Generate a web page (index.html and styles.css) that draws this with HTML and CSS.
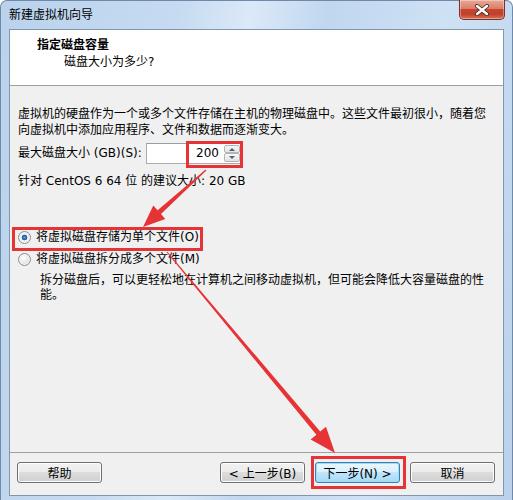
FILE: index.html
```html
<!DOCTYPE html>
<html lang="zh-CN">
<head>
  <meta charset="UTF-8">
  <title>新建虚拟机向导</title>
  <link rel="stylesheet" href="styles.css">
</head>
<body>

  <div class="window">
    <div class="titlebar">
      <span class="title">新建虚拟机向导</span>
      <button class="close" type="button" aria-label="关闭">
        <svg width="16" height="12" viewBox="0 0 16 12">
          <path d="M3 2 L13 10 M13 2 L3 10" stroke="#3b2a26" stroke-width="4" stroke-linecap="round"/>
          <path d="M3 2 L13 10 M13 2 L3 10" stroke="#fff" stroke-width="2.4" stroke-linecap="round"/>
        </svg>
      </button>
    </div>

    <div class="client">
      <div class="header">
        <div class="header-title">指定磁盘容量</div>
        <div class="header-sub">磁盘大小为多少?</div>
      </div>

      <div class="content">
        <p class="intro">虚拟机的硬盘作为一个或多个文件存储在主机的物理磁盘中。这些文件最初很小，随着您向虚拟机中添加应用程序、文件和数据而逐渐变大。</p>

        <div class="size-row">
          <label for="size">最大磁盘大小 (GB)(S):</label>
          <div class="spin">
            <input id="size" type="text" value="200">
            <div class="spin-btns">
              <span class="spin-up"></span>
              <span class="spin-down"></span>
            </div>
          </div>
        </div>

        <p class="hint">针对 CentOS 6 64 位 的建议大小: 20 GB</p>

        <div class="options">
          <label class="radio"><span class="dot checked"></span>将虚拟磁盘存储为单个文件(O)</label>
          <label class="radio"><span class="dot"></span>将虚拟磁盘拆分成多个文件(M)</label>
          <p class="desc">拆分磁盘后，可以更轻松地在计算机之间移动虚拟机，但可能会降低大容量磁盘的性能。</p>
        </div>
      </div>

      <div class="footer">
        <button type="button" class="btn">帮助</button>
        <button type="button" class="btn btn-back">&lt; 上一步(B)</button>
        <button type="button" class="btn btn-next">下一步(N) &gt;</button>
        <button type="button" class="btn">取消</button>
      </div>
    </div>

    <!-- red annotations drawn over the dialog -->
    <svg class="marks" width="513" height="500" viewBox="0 0 513 500">
      <g fill="none" stroke="#e63436" stroke-width="3">
        <rect x="187.5" y="142.5" width="54" height="24"/>
        <rect x="13.5" y="228.5" width="188" height="21"/>
        <rect x="312.5" y="457.5" width="92" height="30"/>
      </g>
      <g fill="#e63436">
        <polygon points="206.4,170.4 161,214.1 165.3,218.9 143,227 153.3,205.5 157.6,210.3 205.6,169.6"/>
        <polygon points="167.4,251.7 320.2,431.5 326,426.7 335,453 310.6,439.5 316.4,434.7 166.6,252.3"/>
      </g>
    </svg>
  </div>

</body>
</html>
```

FILE: styles.css
```css
body {
  margin: 0;
  font-family: "DejaVu Sans", "Noto Sans CJK SC", sans-serif;
  font-size: 12px;
  color: #000;
  background: #fff;
}

.window {
  position: relative;
  box-sizing: border-box;
  width: 513px;
  height: 500px;
  padding: 0 8px 4px 8px;
  display: flex;
  flex-direction: column;
  border: 1px solid #6f8aa8;
  border-bottom: none;
  border-radius: 7px 7px 0 0;
  background: linear-gradient(100deg, #bad2ec 0%, #c6dbf1 30%, #dbe9f8 42%, #c0d7ef 55%, #cfe1f4 75%, #b9d1eb 100%);
}

.titlebar {
  height: 28px;
  display: flex;
  align-items: center;
  position: relative;
}

.title {
  line-height: 16px;
  margin-top: -1px;
}

.close {
  position: absolute;
  top: -1px;
  right: -1px;
  width: 46px;
  height: 20px;
  padding: 0;
  display: flex;
  align-items: center;
  justify-content: center;
  border: 1px solid #7b3226;
  border-top: none;
  border-radius: 0 0 5px 5px;
  background: linear-gradient(#e9a897 0%, #dc7f68 45%, #c7432c 50%, #c2402a 75%, #d9735a 100%);
  box-shadow: inset 0 0 0 1px rgba(255,255,255,0.35);
}

.client {
  flex: 1;
  display: flex;
  flex-direction: column;
  border: 1px solid #8296ae;
  background: #f0f0f0;
}

.header {
  height: 56px;
  box-sizing: border-box;
  padding: 7px 0 0 27px;
  background: #fff;
  border-bottom: 1px solid #a0a0a0;
  line-height: 16px;
}

.header-title {
  font-weight: bold;
}

.header-sub {
  padding-left: 27px;
  margin-top: 1px;
}

.content {
  flex: 1;
  padding: 20px 0 0 8px;
}

.intro {
  margin: 0;
  width: 474px;
  line-height: 16px;
}

.size-row {
  display: flex;
  align-items: center;
  height: 22px;
  margin-top: 4px;
}

.size-row label {
  width: 128px;
  line-height: 16px;
}

.spin {
  display: flex;
  height: 21px;
  box-sizing: border-box;
  border: 1px solid #abadb3;
  border-top-color: #9a9ca3;
  background: #fff;
}

.spin input {
  width: 72px;
  border: none;
  padding: 0 5px 0 0;
  margin: 0;
  font: inherit;
  text-align: right;
  background: transparent;
  outline: none;
}

.spin-btns {
  width: 16px;
  display: flex;
  flex-direction: column;
  padding: 1px 1px 1px 0;
}

.spin-up,
.spin-down {
  flex: 1;
  position: relative;
  border: 1px solid #b5b5b5;
  border-radius: 2px;
  background: linear-gradient(#f7f7f7, #e3e3e3);
}

.spin-up::after,
.spin-down::after {
  content: "";
  position: absolute;
  left: 4px;
  top: 2px;
  border-left: 3px solid transparent;
  border-right: 3px solid transparent;
}

.spin-up::after {
  border-bottom: 3px solid #4d6185;
}

.spin-down::after {
  border-top: 3px solid #4d6185;
}

.hint {
  margin: 9px 0 0;
  line-height: 16px;
}

.options {
  margin-top: 37px;
}

.radio {
  display: flex;
  align-items: center;
  height: 22px;
  line-height: 16px;
}

.dot {
  width: 11px;
  height: 11px;
  margin-right: 5px;
  border: 1px solid #8b8d90;
  border-radius: 50%;
  background: radial-gradient(circle at 40% 35%, #ffffff 0%, #e6e6e6 55%, #cfcfcf 100%);
  box-shadow: inset 0 0 0 1px #f4f4f4;
}

.dot.checked {
  background: radial-gradient(circle at 50% 50%, #5fa2d8 0%, #1f5fa8 28%, #2d6bb0 34%, #f2f2f2 40%, #dcdcdc 100%);
}

.desc {
  margin: 3px 0 0 22px;
  width: 450px;
  line-height: 15px;
}

.footer {
  display: flex;
  padding: 9px 8px 12px 7px;
  border-top: 1px solid #a0a0a0;
}

.btn {
  width: 85px;
  height: 21px;
  padding: 0;
  font: inherit;
  color: #000;
  border: 1px solid #707070;
  border-radius: 3px;
  background: linear-gradient(#f2f2f2 0%, #ebebeb 50%, #dddddd 50%, #cfcfcf 100%);
  box-shadow: inset 0 0 0 1px #fcfcfc;
}

.btn-back {
  margin-left: auto;
}

.btn + .btn-next,
.btn-next + .btn {
  margin-left: 10px;
}

.btn-next {
  border-color: #3c7fb1;
  background: linear-gradient(#eaf6fd 0%, #d9f0fc 50%, #bee6fd 50%, #a7d9f5 100%);
  box-shadow: inset 0 0 0 1px #9edcfa;
}

.marks {
  position: absolute;
  left: -1px;
  top: -1px;
  pointer-events: none;
}
```
